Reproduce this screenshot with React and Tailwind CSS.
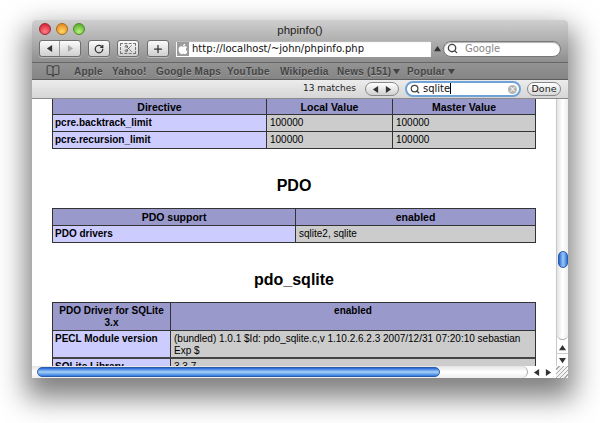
import { Search, RotateCw, Plus, Scissors, BookOpen } from 'lucide-react';
import { FaApple } from 'react-icons/fa';

const bookmarks = [
  ['Apple', 'w-[38px]'],
  ['Yahoo!', 'w-[44px]'],
  ['Google Maps', 'w-[71px]'],
  ['YouTube', 'w-[53px]'],
  ['Wikipedia', 'w-[57px]'],
];

const btn = 'h-[17px] flex items-center justify-center rounded-[3px] border border-[#6e6e6e] bg-gradient-to-b from-[#fbfbfb] to-[#cfcfcf] shadow-[0_1px_0_rgba(255,255,255,0.35)]';
const headCell = 'flex items-center justify-center text-center font-bold bg-[#9999cc] border-r border-[#333] last:border-r-0 px-1';
const keyCell = 'font-bold bg-[#ccccff] border-r border-[#333] px-[2px]';
const valCell = 'bg-[#cccccc] border-r border-[#333] last:border-r-0 px-[3px]';

function Tri({ dir = 'right', color = '#333' }) {
  const points = { right: '1,0 7,4 1,8', left: '7,0 1,4 7,8', up: '0,7 4,1 8,7', down: '0,1 4,7 8,1' };
  return (
    <svg width="7" height="7" viewBox="0 0 8 8">
      <polygon points={points[dir]} fill={color} />
    </svg>
  );
}

function Toolbar() {
  return (
    <div className="h-[43px] bg-gradient-to-b from-[#cfcfcf] to-[#8f8f8f] border-b border-[#666] relative">
      <div className="flex gap-[5px] pl-[7px] pt-[3px]">
        <div className="w-3 h-3 rounded-full bg-[radial-gradient(circle_at_50%_75%,#ff7f86,#d3122a)] border border-[#9a2a30]" />
        <div className="w-3 h-3 rounded-full bg-[radial-gradient(circle_at_50%_75%,#ffd768,#e27d10)] border border-[#a66b20]" />
        <div className="w-3 h-3 rounded-full bg-[radial-gradient(circle_at_50%_75%,#b8f07c,#46a01c)] border border-[#4f8a2a]" />
      </div>
      <div className="absolute left-0 right-0 top-[3px] text-center text-[11.5px] leading-[14px] text-[#222] font-['Liberation_Sans',sans-serif]">
        phpinfo()
      </div>
      <div className="flex items-center pl-[7px] mt-[5px]">
        <div className={`${btn} w-[42px]`}>
          <span className="w-[21px] h-full flex items-center justify-center border-r border-[#999]"><Tri dir="left" /></span>
          <span className="w-[21px] flex justify-center"><Tri color="#aaa" /></span>
        </div>
        <div className={`${btn} w-[22px] ml-[7px]`}>
          <RotateCw size={10} strokeWidth={3} color="#333" />
        </div>
        <div className={`${btn} w-[22px] ml-[7px]`}>
          <span className="w-[16px] h-[11px] border border-dashed border-[#777] flex items-center justify-center">
            <Scissors size={9} strokeWidth={1.5} color="#333" />
          </span>
        </div>
        <div className={`${btn} w-[22px] ml-[8px]`}>
          <Plus size={12} strokeWidth={2.5} color="#333" />
        </div>
        <div className="ml-[7px] w-[255px] h-4 bg-white flex items-center pl-[1px] shadow-[inset_0_1px_1px_rgba(0,0,0,0.3)]">
          <span className="w-[12px] h-[14px] bg-[#9c9c9c] flex items-center justify-center">
            <FaApple size={12} color="#fff" />
          </span>
          <span className="ml-[3px] text-[10px] text-[#111] font-['DejaVu_Sans',sans-serif] whitespace-nowrap">
            http://localhost/~john/phpinfo.php
          </span>
        </div>
        <span className="ml-[1px] w-[10px] flex justify-center"><Tri dir="up" color="#333" /></span>
        <div className="ml-[1px] w-[118px] h-4 rounded-full bg-white border border-[#777] flex items-center pl-[3px] shadow-[inset_0_1px_1px_rgba(0,0,0,0.3)]">
          <Search size={11} strokeWidth={3} color="#444" />
          <span className="ml-[7px] text-[10px] text-[#888] font-['DejaVu_Sans',sans-serif]">Google</span>
        </div>
      </div>
    </div>
  );
}

function BookmarksBar() {
  return (
    <div className="h-[17px] bg-gradient-to-b from-[#939393] to-[#858585] border-b border-[#5d5d5d] flex items-center pl-[14px] text-[10px] font-bold tracking-[0.2px] text-[#444] font-['Liberation_Sans',sans-serif] [text-shadow:0_1px_0_rgba(255,255,255,0.3)] whitespace-nowrap">
      <BookOpen size={14} strokeWidth={1.5} color="#333" className="mr-[14px]" />
      {bookmarks.map(([name, w]) => (
        <span key={name} className={w}>{name}</span>
      ))}
      <span className="flex items-center gap-[2px] w-[70px]">News (151) <Tri dir="down" color="#444" /></span>
      <span className="flex items-center gap-[2px]">Popular <Tri dir="down" color="#444" /></span>
    </div>
  );
}

function FindBar() {
  return (
    <div className="h-[19px] bg-gradient-to-b from-[#ececec] to-[#d6d6d6] border-b border-[#8a8a8a] flex items-center justify-end pr-[7px] text-[9px] text-[#222] font-['DejaVu_Sans',sans-serif]">
      <span className="whitespace-nowrap mr-[9px]">13 matches</span>
      <div className="w-[34px] h-[14px] rounded-full border border-[#888] bg-gradient-to-b from-white to-[#d0d0d0] flex items-center justify-around px-[3px]">
        <Tri dir="left" />
        <Tri />
      </div>
      <div className="ml-[6px] w-[116px] h-[16px] rounded-full bg-white border-2 border-[#6fa3d8] flex items-center pl-[3px] pr-[2px]">
        <Search size={10} strokeWidth={3} color="#444" />
        <span className="ml-[3px] flex-1 text-[10px] text-[#111] leading-none">sqlite<span className="border-l border-black" /></span>
        <span className="w-[9px] h-[9px] rounded-full bg-[#b4b4b4] text-white text-[8px] leading-[9px] text-center">×</span>
      </div>
      <div className="ml-[6px] w-[34px] h-[14px] rounded-full border border-[#888] bg-gradient-to-b from-white to-[#d8d8d8] flex items-center justify-center text-[9.5px]">
        Done
      </div>
    </div>
  );
}

function PageContent() {
  return (
    <div className="flex-1 h-[267px] overflow-hidden bg-white pl-5 pr-5 text-[10px] leading-[12px] text-black font-['Liberation_Sans',sans-serif]">
      {/* tabulka je odrezana nahore, hlavicka zacina hned pod find barem */}
      <div className="border border-t-0 border-[#333]">
        <div className="grid grid-cols-[214px_126px_1fr] h-[16px] text-[10.5px] border-b border-[#333]">
          <div className={headCell}>Directive</div>
          <div className={headCell}>Local Value</div>
          <div className={headCell}>Master Value</div>
        </div>
        <div className="grid grid-cols-[214px_126px_1fr] h-[17px] leading-[16px] border-b border-[#333]">
          <div className={keyCell}>pcre.backtrack_limit</div>
          <div className={valCell}>100000</div>
          <div className={valCell}>100000</div>
        </div>
        <div className="grid grid-cols-[214px_126px_1fr] h-[16px] leading-[15px]">
          <div className={keyCell}>pcre.recursion_limit</div>
          <div className={valCell}>100000</div>
          <div className={valCell}>100000</div>
        </div>
      </div>

      <h2 className="mt-[28px] mb-[13px] h-[18px] text-center text-[16px] leading-[18px] font-bold">PDO</h2>

      <div className="border border-[#333]">
        <div className="grid grid-cols-[243px_1fr] h-[17px] text-[10.5px] border-b border-[#333]">
          <div className={`${headCell} pb-[1px]`}>PDO support</div>
          <div className={`${headCell} pb-[1px]`}>enabled</div>
        </div>
        <div className="grid grid-cols-[243px_1fr] h-[16px] leading-[15px]">
          <div className={keyCell}>PDO drivers</div>
          <div className={valCell}>sqlite2, sqlite</div>
        </div>
      </div>

      <h2 className="mt-[27px] mb-[13px] h-[19px] text-center text-[16px] leading-[19px] font-bold">pdo_sqlite</h2>

      <div className="border border-[#333]">
        <div className="grid grid-cols-[118px_1fr] h-[28px] border-b border-[#333]">
          <div className={`${headCell} !px-0 items-start pt-[2px]`}>PDO Driver for SQLite 3.x</div>
          <div className={`${headCell} items-start pt-[2px]`}>enabled</div>
        </div>
        <div className="grid grid-cols-[118px_1fr] h-[28px] border-b-2 border-[#444]">
          <div className={`${keyCell} pt-[2px]`}>PECL Module version</div>
          <div className={`${valCell} pt-[2px]`}>(bundled) 1.0.1 $Id: pdo_sqlite.c,v 1.10.2.6.2.3 2007/12/31 07:20:10 sebastian Exp $</div>
        </div>
        <div className="grid grid-cols-[118px_1fr] h-[16px] leading-[16px]">
          <div className={keyCell}>SQLite Library</div>
          <div className={valCell}>3.3.7</div>
        </div>
      </div>
    </div>
  );
}

function VScroll() {
  return (
    <div className="w-3 h-[267px] bg-white border-l border-[#c8c8c8] flex flex-col items-center">
      <div className="w-full flex-1 bg-gradient-to-r from-[#e4e4e4] via-white to-[#ededed] rounded-b-full border-b border-[#aaa] pt-[152px] mb-[2px]">
        <div className="h-[17px] mx-auto w-[10px] rounded-full bg-gradient-to-r from-[#1f62d6] via-[#9cc8f5] to-[#2f78e0] border border-[#2a5ca8]" />
      </div>
      <div className="h-3 w-full flex items-center justify-center border-b border-[#ccc]"><Tri dir="up" /></div>
      <div className="h-3 w-full flex items-center justify-center"><Tri dir="down" /></div>
    </div>
  );
}

function HScroll() {
  return (
    <div className="h-3 flex bg-white">
      <div className="w-[496px] pl-[5px] bg-gradient-to-b from-[#e4e4e4] via-white to-[#ededed] rounded-r-full border-r border-[#aaa] flex items-center">
        <div className="w-[403px] h-[10px] rounded-full bg-gradient-to-b from-[#1f62d6] via-[#a8d0f7] to-[#2f78e0] border border-[#2a5ca8]" />
      </div>
      <div className="w-[28px] flex items-center justify-around px-[2px]">
        <Tri dir="left" />
        <Tri />
      </div>
      <div className="w-3 bg-[repeating-linear-gradient(135deg,#f2f2f2_0,#f2f2f2_2px,#a9a9a9_2px,#a9a9a9_3px)]" />
    </div>
  );
}

export default function App() {
  return (
    <div className="w-[600px] h-[423px] bg-white pt-5 pl-8 overflow-hidden">
      <div className="w-[536px] h-[358px] shadow-[0_14px_28px_6px_rgba(0,0,0,0.5)] rounded-t-[4px] overflow-hidden">
        <Toolbar />
        <BookmarksBar />
        <FindBar />
        <div className="flex">
          <PageContent />
          <VScroll />
        </div>
        <HScroll />
      </div>
    </div>
  );
}
